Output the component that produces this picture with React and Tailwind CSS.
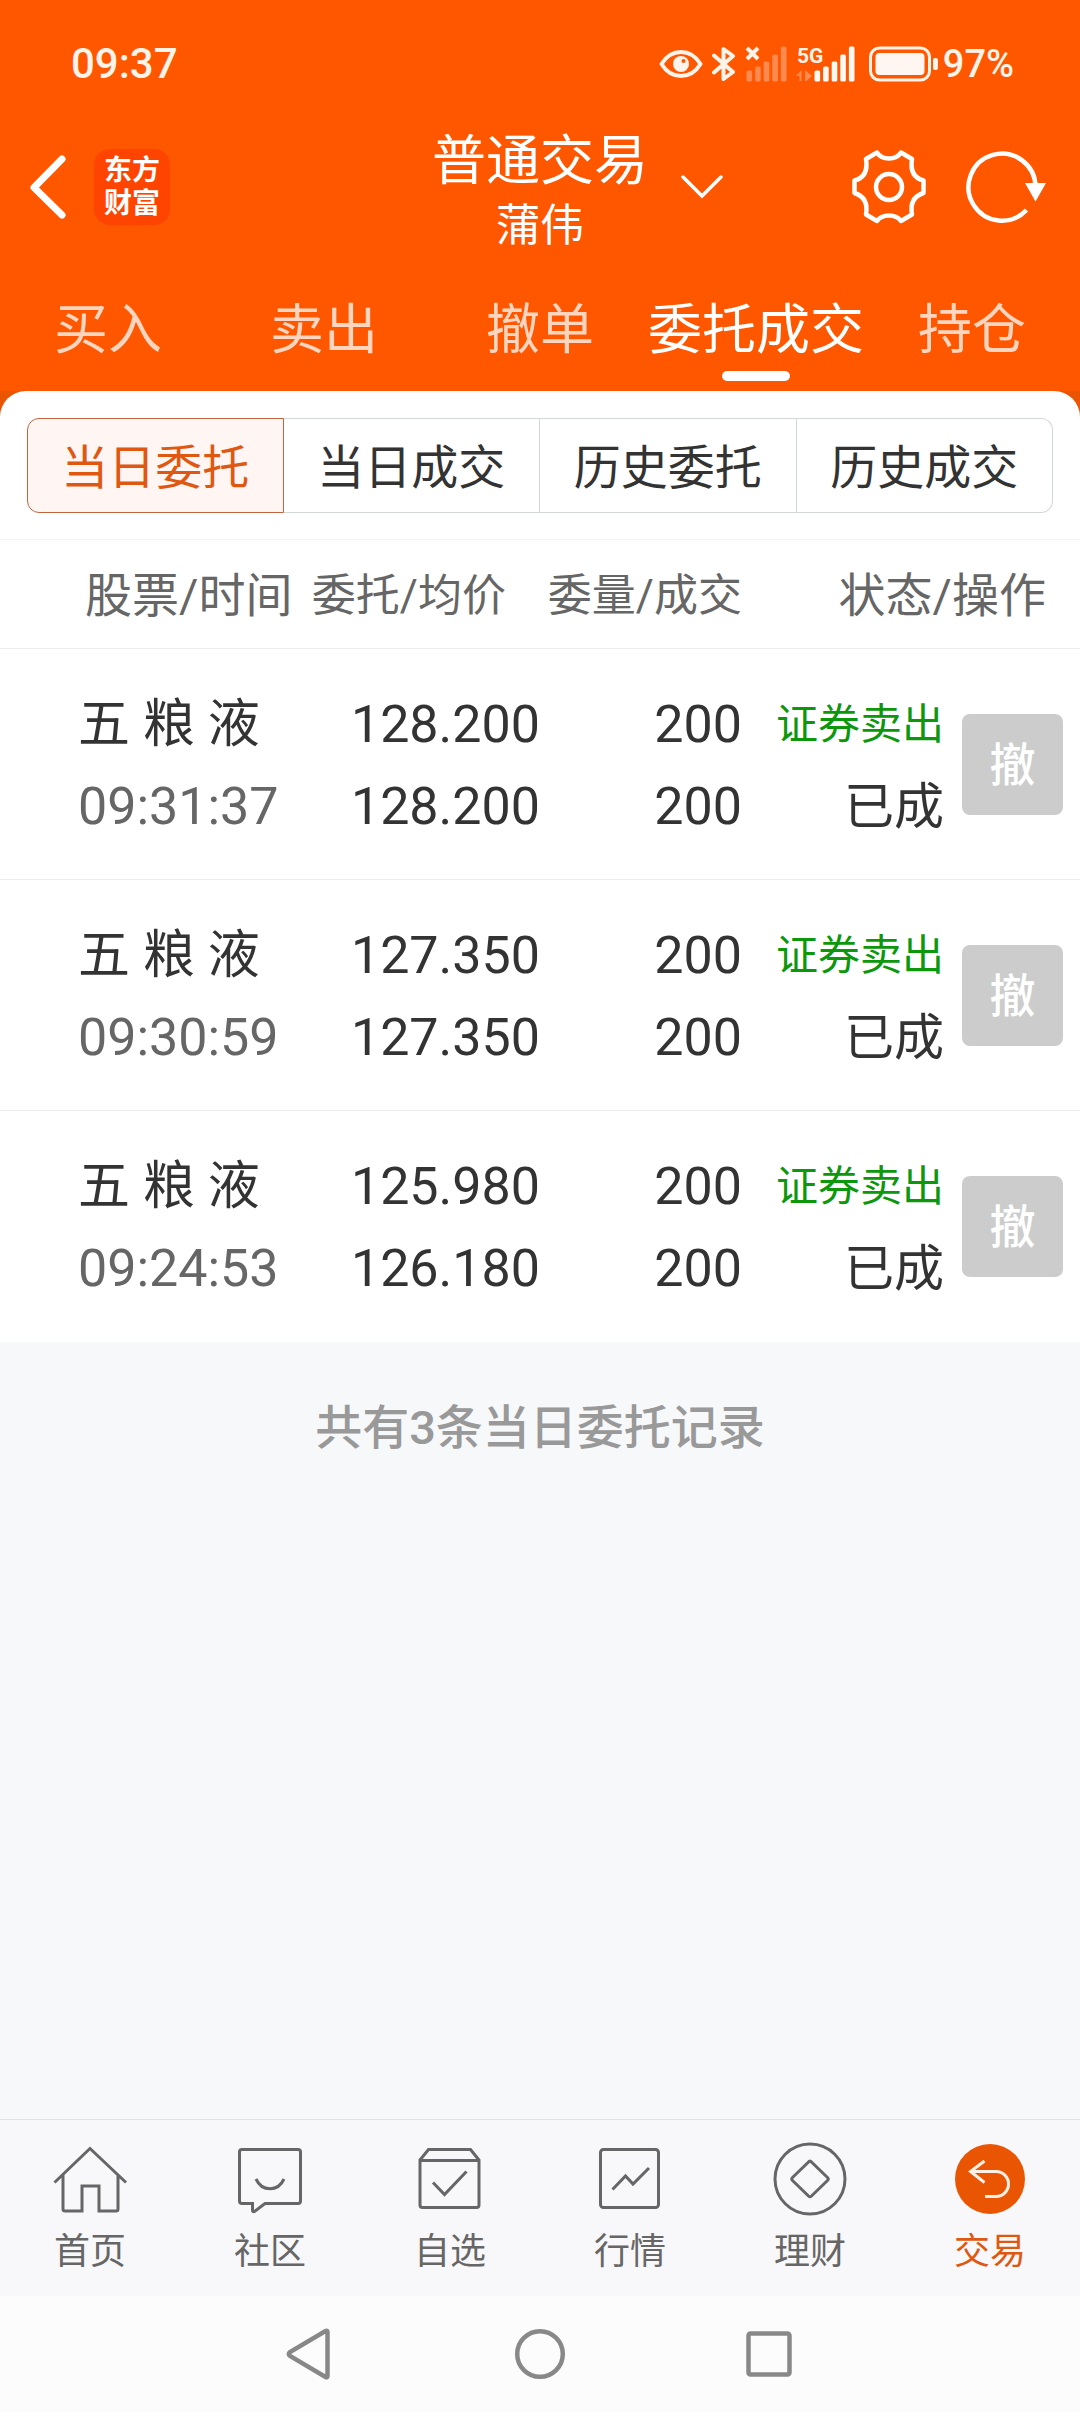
import React from "react";

const tabs = ["买入", "卖出", "撤单", "委托成交", "持仓"];
const segments = ["当日委托", "当日成交", "历史委托", "历史成交"];
const orders = [
  { name: "五 粮 液", time: "09:31:37", price: "128.200", avg: "128.200", qty: "200", filled: "200" },
  { name: "五 粮 液", time: "09:30:59", price: "127.350", avg: "127.350", qty: "200", filled: "200" },
  { name: "五 粮 液", time: "09:24:53", price: "125.980", avg: "126.180", qty: "200", filled: "200" },
];

function EyeIcon() {
  return (
    <svg className="h-9 w-11" viewBox="0 0 44 36" fill="none" aria-hidden="true">
      <path d="M2.500 18C8 9 14.500 6 22 6S36 9 41.500 18C36 27 29.500 30 22 30S8 27 2.500 18Z" stroke="#fff3ea" strokeWidth="4" strokeLinejoin="round" />
      <circle cx="22" cy="18" r="8" fill="#fff3ea" />
      <circle cx="24.500" cy="15" r="2" fill="#ff5700" />
    </svg>
  );
}

function BluetoothIcon() {
  return (
    <svg className="h-9 w-6" viewBox="0 0 24 36" fill="none" aria-hidden="true">
      <path d="M2 9.500 21 26 11.500 33V3L21 10 2 26.500" stroke="#fff3ea" strokeWidth="4" strokeLinejoin="round" strokeLinecap="round" />
    </svg>
  );
}

function Bars({ x, fill }) {
  return [0, 1, 2, 3, 4].map((i) => {
    const heights = [11, 15, 20, 27, 35];
    return <rect key={i} x={x + i * 8.6} y={35.5 - heights[i]} width="5.600" height={heights[i]} rx="1.500" fill={fill} />;
  });
}

function NoSignalIcon() {
  return (
    <svg className="h-9 w-[42px]" viewBox="0 0 42 36" fill="none" aria-hidden="true">
      <Bars x={1.5} fill="#ff8a50" />
      <path d="M2 2 13 13M13 2 2 13" stroke="#fff3ea" strokeWidth="4" />
    </svg>
  );
}

function SignalIcon() {
  return (
    <svg className="h-11 w-[60px]" viewBox="0 -4 60 44" fill="none" aria-hidden="true">
      <text x="1" y="17" fontSize="21" fontWeight="700" fontFamily="Roboto, sans-serif" fill="#fff3ea">5G</text>
      <path d="M0 30 5.500 24V35H3.500V30ZM9 24 16 30 11 34.500V35H9Z" fill="#ff8a50" />
      <Bars x={18.5} fill="#fff9f4" />
    </svg>
  );
}

function BatteryIcon() {
  return (
    <svg className="h-9 w-[70px]" viewBox="0 0 70 36" fill="none" aria-hidden="true">
      <rect x="1.500" y="2" width="59" height="32" rx="9" stroke="#fff3ea" strokeWidth="3" />
      <rect x="6.500" y="7" width="49" height="22" rx="4" fill="#fff6f1" />
      <rect x="64" y="12" width="5" height="12" rx="2" fill="#fff3ea" />
    </svg>
  );
}

function BackIcon() {
  return (
    <svg className="h-16 w-10" viewBox="0 0 40 64" fill="none" aria-hidden="true">
      <path d="M34 4 6 32.500 34 60" stroke="#fff" strokeWidth="7" strokeLinejoin="round" strokeLinecap="round" />
    </svg>
  );
}

function ChevronIcon() {
  return (
    <svg className="h-6 w-11" viewBox="0 0 44 24" fill="none" aria-hidden="true">
      <path d="M3 2 22 21 41 2" stroke="#fff" strokeWidth="3.500" strokeLinecap="round" />
    </svg>
  );
}

function GearIcon() {
  return (
    <svg className="size-[76px]" viewBox="0 0 76 76" fill="none" stroke="#fff" strokeWidth="4.500" strokeLinejoin="round" aria-hidden="true">
      <path d="M26 3.500C31 11.500 45 11.500 50 3.500L61 10C59 22 63 29 72.500 31.500V44C63 47 59 54 61 65.500L50 72C45 64.500 31 64.500 26 72L15 65.500C17 54 13 47 3.500 44V31.500C13 29 17 22 15 10Z" />
      <circle cx="38" cy="38" r="13" />
    </svg>
  );
}

function RefreshIcon() {
  return (
    <svg className="h-[76px] w-[84px]" viewBox="0 0 84 76" fill="none" aria-hidden="true">
      <path d="M70.500 38A33.500 33.500 0 1 0 61.500 61" stroke="#fff" strokeWidth="4.500" />
      <path d="M60 34H81L70.500 52.500Z" fill="#fff" />
    </svg>
  );
}

function NavIcon({ kind }) {
  if (kind === "trade") {
    return (
      <svg className="size-20" viewBox="0 0 80 80" fill="none" aria-hidden="true">
        <circle cx="40" cy="40" r="35" fill="#ea5504" />
        <path d="M34.500 22 20.500 32.500 34.500 43.500M20.500 32.500H46A12.500 12.500 0 0 1 46 57.500H35" stroke="#fff0e6" strokeWidth="3" />
      </svg>
    );
  }
  return (
    <svg className="size-20" viewBox="0 0 80 80" fill="none" stroke="#666" strokeWidth="3" aria-hidden="true">
      {kind === "home" && (
        <path d="M4.500 43.500 40 9.500 76 43.500M13 36V70Q13 72 15 72H32V47H49V72H66Q68 72 68 70V36" />
      )}
      {kind === "community" && (
        <>
          <path d="M12 10.500H68Q70.500 10.500 70.500 13V62Q70.500 64.500 68 64.500H35L24.500 72.500Q22.500 73.500 22.500 71V64.500H12Q9.500 64.500 9.500 62V13Q9.500 10.500 12 10.500Z" />
          <path d="M26 40C32 53 48 53 54 40" />
        </>
      )}
      {kind === "watch" && (
        <>
          <path d="M10 21 18.500 10.500H60.500L69 21V66Q69 68.500 66.500 68.500H12.500Q10 68.500 10 66ZM10 21.500H69" />
          <path d="M23 43.500 34.500 55.500 56.500 32.500" />
        </>
      )}
      {kind === "market" && (
        <>
          <rect x="10.500" y="10.500" width="58" height="58" rx="3" />
          <path d="M22.500 50.500 35.500 37 43 45 59 29" />
        </>
      )}
      {kind === "finance" && (
        <>
          <circle cx="40" cy="40" r="35" />
          <path d="M38.500 23Q40 21 41.500 23L57.500 38.500Q59 40 57.500 41.500L41.500 57Q40 58.500 38.500 57L22.500 41.500Q21 40 22.500 38.500Z" />
        </>
      )}
    </svg>
  );
}

const navItems = [
  { label: "首页", kind: "home" },
  { label: "社区", kind: "community" },
  { label: "自选", kind: "watch" },
  { label: "行情", kind: "market" },
  { label: "理财", kind: "finance" },
  { label: "交易", kind: "trade", active: true },
];

function StatusBar() {
  return (
    <div className="flex h-[119px] items-center justify-between pt-2 pr-[66px] pl-[71px] font-medium text-[#fff3ea]">
      <span className="text-[42px] leading-none">09:37</span>
      <div className="flex items-center gap-[9px]">
        <EyeIcon />
        <BluetoothIcon />
        <NoSignalIcon />
        <SignalIcon />
        <div className="flex items-center gap-1 pl-1">
          <BatteryIcon />
          <span className="text-[38px] leading-none">97%</span>
        </div>
      </div>
    </div>
  );
}

function TitleBar() {
  return (
    <div className="grid grid-cols-[1fr_auto_1fr] items-center text-white">
      <div className="flex items-center gap-[26px] pl-7">
        <button type="button" aria-label="返回"><BackIcon /></button>
        <div className="flex size-[76px] flex-col items-center justify-center rounded-2xl bg-[#ff4300] text-[28px] leading-[33px] font-bold">
          <span>东方</span>
          <span>财富</span>
        </div>
      </div>
      <div className="flex flex-col items-center pt-2">
        <h1 className="text-[54px] leading-[70px]">普通交易</h1>
        <p className="text-[44px] leading-[58px]">蒲伟</p>
      </div>
      <div className="flex items-center justify-between pr-[31px] pl-8">
        <button type="button" aria-label="切换账户"><ChevronIcon /></button>
        <div className="flex items-center gap-[38px]">
          <button type="button" aria-label="设置"><GearIcon /></button>
          <button type="button" aria-label="刷新"><RefreshIcon /></button>
        </div>
      </div>
    </div>
  );
}

function Tabs() {
  return (
    <nav className="grid grid-cols-5 pt-9 pb-2.5">
      {tabs.map((t) => {
        const active = t === "委托成交";
        return (
          <button key={t} type="button" className="flex flex-col items-center whitespace-nowrap">
            <span className={active ? "text-[54px] leading-[80px] text-white" : "text-[54px] leading-[80px] text-[#ffd5bf]"}>{t}</span>
            <span className={active ? "h-2.5 w-[68px] rounded-full bg-white" : "h-2.5 w-[68px]"} />
          </button>
        );
      })}
    </nav>
  );
}

function Segments() {
  return (
    <div className="px-[27px] pt-[27px] pb-[26px]">
      <div className="grid grid-cols-4">
        {segments.map((s, i) => (
          <button
            key={s}
            type="button"
            className={
              i === 0
                ? "h-[95px] rounded-l-xl border border-[#c0653f] bg-[#fff6f3] pt-1 text-[47px] leading-none text-[#df5812]"
                : i === 3
                  ? "h-[95px] rounded-r-xl border border-l-0 border-[#d4d6d6] pt-1 text-[47px] leading-none text-[#333]"
                  : "h-[95px] border border-l-0 border-[#d4d6d6] pt-1 text-[47px] leading-none text-[#333]"
            }
          >
            {s}
          </button>
        ))}
      </div>
    </div>
  );
}

function Orders() {
  return (
    <table className="w-full table-fixed border-collapse text-[#333]">
      <colgroup>
        <col className="w-[28%]" />
        <col className="w-[22%]" />
        <col className="w-[18.7%]" />
        <col className="w-[18.9%]" />
        <col className="w-[12.4%]" />
      </colgroup>
      <thead>
        <tr className="h-[109px] border-y border-t-[#f5f5f5] border-b-[#ececec] whitespace-nowrap text-[#666]">
          <th scope="col" className="pt-[3px] pl-[85px] text-left text-[47px] leading-none font-normal">股票/时间</th>
          <th scope="col" className="pt-[3px] pr-[34px] text-right text-[44px] leading-none font-normal">委托/均价</th>
          <th scope="col" className="pt-[3px] text-right text-[44px] leading-none font-normal">委量/成交</th>
          <th scope="col" colSpan={2} className="pt-[3px] pr-[34px] text-right text-[47px] leading-none font-normal">状态/操作</th>
        </tr>
      </thead>
      <tbody>
        {orders.map((o) => (
          <tr key={o.time} className="h-[231px] border-b border-[#ececec] text-[52px] leading-[82px] whitespace-nowrap last:border-b-0">
            <td className="pt-1 pl-[78px]">
              <div>{o.name}</div>
              <div className="text-[#666]">{o.time}</div>
            </td>
            <td className="pt-1 text-right">
              <div>{o.price}</div>
              <div>{o.avg}</div>
            </td>
            <td className="pt-1 text-right">
              <div>{o.qty}</div>
              <div>{o.filled}</div>
            </td>
            <td className="pt-1 pr-0.5">
              <div className="flex flex-col items-end">
                <div className="text-[42px] leading-[82px] text-[#0c970c]">证券卖出</div>
                <div className="text-[50px] leading-[82px]">已成</div>
              </div>
            </td>
            <td>
              <div className="flex justify-end pr-[17px]">
                <button type="button" disabled className="size-[101px] rounded-lg bg-[#ccc] pt-0.5 text-[46px] leading-none font-medium text-white">撤</button>
              </div>
            </td>
          </tr>
        ))}
      </tbody>
    </table>
  );
}

function BottomNav() {
  return (
    <nav className="grid h-[177px] grid-cols-6 border-t border-[#e0e2e5] bg-[#f8f8fa] pt-[19px]">
      {navItems.map((n) => (
        <a key={n.label} href="#" className="flex flex-col items-center gap-1.5">
          <NavIcon kind={n.kind} />
          <span className={n.active ? "text-[36px] leading-[54px] text-[#df5812]" : "text-[36px] leading-[54px] text-[#666]"}>{n.label}</span>
        </a>
      ))}
    </nav>
  );
}

function SystemBar() {
  return (
    <div className="flex h-[116px] items-center justify-center gap-[169px] bg-[#fcfcfc]">
      <button type="button" aria-label="系统返回">
        <svg className="size-[60px]" viewBox="0 0 60 60" fill="none" aria-hidden="true">
          <path d="M46.500 8V52Q46.500 54 44.500 53L9 32Q6.500 30 9 28L44.500 7Q46.500 6 46.500 8Z" stroke="#888" strokeWidth="4.500" />
        </svg>
      </button>
      <button type="button" aria-label="主屏幕">
        <svg className="size-[60px]" viewBox="0 0 60 60" fill="none" aria-hidden="true">
          <circle cx="30" cy="30" r="22.800" stroke="#888" strokeWidth="4.500" />
        </svg>
      </button>
      <button type="button" aria-label="最近任务">
        <svg className="size-[60px]" viewBox="0 0 60 60" fill="none" aria-hidden="true">
          <rect x="9.500" y="9.500" width="41" height="41" rx="2" stroke="#888" strokeWidth="4.500" />
        </svg>
      </button>
    </div>
  );
}

export default function App() {
  return (
    <div className="flex min-h-screen flex-col bg-[#f7f8fa] font-[Roboto,'Noto_Sans_CJK_SC',sans-serif]">
      <header className="bg-[#ff5700]">
        <StatusBar />
        <TitleBar />
        <Tabs />
      </header>
      <main className="flex-1">
        <div className="bg-[#ea5504]">
          <div className="rounded-t-[26px] bg-white">
            <Segments />
            <Orders />
          </div>
        </div>
        <p className="pt-[51px] text-center text-[47px] leading-[70px] font-medium text-[#999]">共有3条当日委托记录</p>
      </main>
      <BottomNav />
      <SystemBar />
    </div>
  );
}
